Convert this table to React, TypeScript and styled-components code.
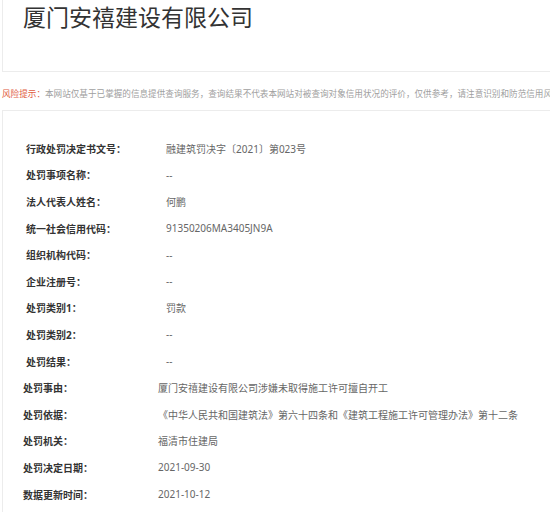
import styled, { createGlobalStyle } from 'styled-components'

const GlobalStyle = createGlobalStyle`
	html, body {
		margin: 0;
		padding: 0;
		background: #fff;
		overflow: hidden;
	}
	body {
		font-family: 'Noto Sans', 'Noto Sans CJK SC', sans-serif;
	}
`

type Row = { label: string; value: string }

const topRows: Row[] = [
	{ label: '行政处罚决定书文号：', value: '融建筑罚决字〔2021〕第023号' },
	{ label: '处罚事项名称：', value: '--' },
	{ label: '法人代表人姓名：', value: '何鹏' },
	{ label: '统一社会信用代码：', value: '91350206MA3405JN9A' },
	{ label: '组织机构代码：', value: '--' },
	{ label: '企业注册号：', value: '--' },
	{ label: '处罚类别1：', value: '罚款' },
	{ label: '处罚类别2：', value: '--' },
	{ label: '处罚结果：', value: '--' },
]

const bottomRows: Row[] = [
	{ label: '处罚事由：', value: '厦门安禧建设有限公司涉嫌未取得施工许可擅自开工' },
	{ label: '处罚依据：', value: '《中华人民共和国建筑法》第六十四条和《建筑工程施工许可管理办法》第十二条' },
	{ label: '处罚机关：', value: '福清市住建局' },
	{ label: '处罚决定日期：', value: '2021-09-30' },
	{ label: '数据更新时间：', value: '2021-10-12' },
]

const App = () => {
	return (
		<Page>
			<GlobalStyle />
			<HeaderCard>
				<Title>厦门安禧建设有限公司</Title>
			</HeaderCard>

			{/* the hint runs past the right edge, as in the original page */}
			<Notice>
				<NoticeLabel>风险提示：</NoticeLabel>
				本网站仅基于已掌握的信息提供查询服务，查询结果不代表本网站对被查询对象信用状况的评价，仅供参考，请注意识别和防范信用风险。
			</Notice>

			<DetailCard>
				<Section $indent={23} $labelWidth={140}>
					{topRows.map((row) => (
						<DetailRow key={row.label}>
							<Label>{row.label}</Label>
							<Value>{row.value}</Value>
						</DetailRow>
					))}
				</Section>
				<Section $indent={20} $labelWidth={135}>
					{bottomRows.map((row) => (
						<DetailRow key={row.label}>
							<Label>{row.label}</Label>
							<Value>{row.value}</Value>
						</DetailRow>
					))}
				</Section>
			</DetailCard>
		</Page>
	)
}

export default App

const Page = styled.div`
	width: 640px;
	padding-left: 2px;
	display: flex;
	flex-direction: column;
`

const HeaderCard = styled.div`
	height: 72px;
	box-sizing: border-box;
	border: 1px solid #ececec;
	border-top: none;
	padding-left: 20px;
`

const Title = styled.h1`
	margin: 0;
	font-size: 23px;
	line-height: 33px;
	font-weight: 400;
	color: #333;
	font-family: 'Noto Sans CJK SC', sans-serif;
`

const Notice = styled.div`
	margin-top: 12px;
	height: 18px;
	line-height: 18px;
	font-size: 8.6px;
	color: #a0a0a0;
	white-space: nowrap;
	font-family: 'Noto Sans CJK SC', sans-serif;
`

const NoticeLabel = styled.span`
	color: #e05a3e;
`

const DetailCard = styled.div`
	margin-top: 8px;
	border: 1px solid #ececec;
	padding-top: 24px;
	padding-bottom: 20px;
`

const Section = styled.div<{ $indent: number; $labelWidth: number }>`
	display: flex;
	flex-direction: column;
	padding-left: ${(p) => p.$indent}px;

	& > div > span:first-child {
		width: ${(p) => p.$labelWidth}px;
	}
`

const DetailRow = styled.div`
	display: flex;
	align-items: center;
	height: 26.6px;
	font-size: 10px;
	white-space: nowrap;
`

const Label = styled.span`
	flex: none;
	font-weight: 700;
	color: #333;
`

const Value = styled.span`
	color: #666;
`
